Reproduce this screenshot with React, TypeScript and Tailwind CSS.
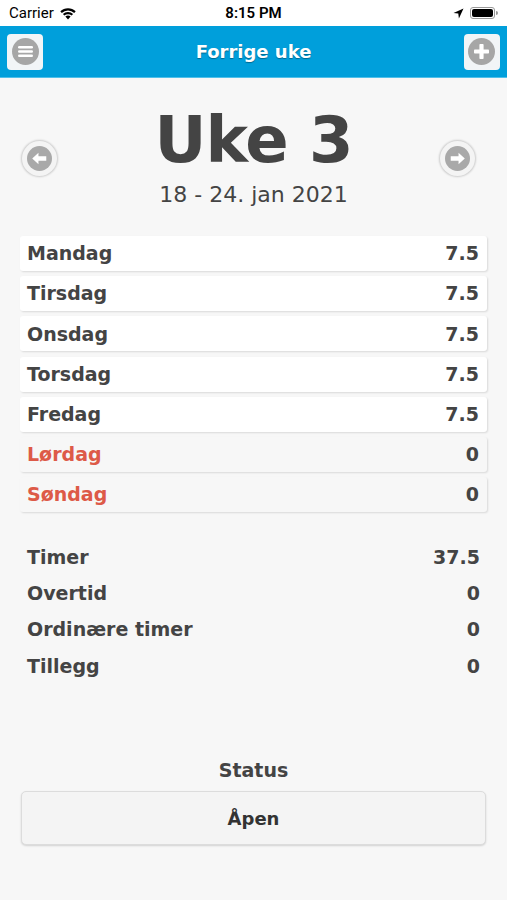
import React from "react";

const days = [
  { name: "Mandag", hours: "7.5", weekend: false },
  { name: "Tirsdag", hours: "7.5", weekend: false },
  { name: "Onsdag", hours: "7.5", weekend: false },
  { name: "Torsdag", hours: "7.5", weekend: false },
  { name: "Fredag", hours: "7.5", weekend: false },
  { name: "Lørdag", hours: "0", weekend: true },
  { name: "Søndag", hours: "0", weekend: true },
];

const totals = [
  { label: "Timer", value: "37.5" },
  { label: "Overtid", value: "0" },
  { label: "Ordinære timer", value: "0" },
  { label: "Tillegg", value: "0" },
];

function StatusBar() {
  return (
    <div className="flex h-[26px] items-center justify-between bg-white px-[9px] text-[15px] text-black [font-family:Roboto,'Liberation_Sans',sans-serif]">
      <div className="flex w-[120px] items-center gap-[5px]">
        <span>Carrier</span>
        <svg width="18" height="13" viewBox="0 0 18 13">
          <path d="M9 12.5 L6.4 9.6 A3.8 3.8 0 0 1 11.6 9.6 Z" fill="#000" />
          <path d="M3.9 7 A7.4 7.4 0 0 1 14.1 7 L12.6 8.6 A5.3 5.3 0 0 0 5.4 8.6 Z" fill="#000" />
          <path d="M1.3 4.3 A11 11 0 0 1 16.7 4.3 L15.2 5.9 A8.9 8.9 0 0 0 2.8 5.9 Z" fill="#000" />
        </svg>
      </div>
      <span className="font-semibold">8:15 PM</span>
      <div className="flex w-[120px] items-center justify-end gap-[6px]">
        <svg width="11" height="11" viewBox="0 0 11 11">
          <path d="M10.5 0.5 L0.5 5 L5.3 5.6 L5.9 10.5 Z" fill="#000" />
        </svg>
        <div className="flex items-center">
          <div className="flex h-[12px] w-[25px] items-center rounded-[3px] border border-[#999] p-[1px]">
            <div className="h-full w-full rounded-[2px] bg-black" />
          </div>
          <div className="ml-[1px] h-[4px] w-[2px] rounded-r-sm bg-[#999]" />
        </div>
      </div>
    </div>
  );
}

function IconBox({ children }: { children: React.ReactNode }) {
  return (
    <div className="flex h-[36px] w-[36px] items-center justify-center rounded-[4px] bg-[#f2f5f7]">
      {children}
    </div>
  );
}

function CircleArrow({ dir }: { dir: "left" | "right" }) {
  return (
    <div className="flex h-[35px] w-[35px] items-center justify-center rounded-full bg-[#f4f4f4] shadow-[0_0_2px_1px_rgba(0,0,0,0.18)]">
      <svg width="25" height="25" viewBox="0 0 24 24">
        <circle cx="12" cy="12" r="12" fill="#a9a9a9" />
        {dir === "left" ? (
          <path d="M5 12 L11 6.5 L11 9.8 L18.5 9.8 L18.5 14.2 L11 14.2 L11 17.5 Z" fill="#fff" />
        ) : (
          <path d="M19 12 L13 6.5 L13 9.8 L5.5 9.8 L5.5 14.2 L13 14.2 L13 17.5 Z" fill="#fff" />
        )}
      </svg>
    </div>
  );
}

export default function App() {
  return (
    <div className="flex min-h-[900px] w-full flex-col bg-[#f7f7f7] text-[#444] [font-family:'DejaVu_Sans',Verdana,sans-serif]">
      <StatusBar />

      {/* Header */}
      <div className="flex h-[52px] items-center justify-between border-b border-[#4fc0ea] bg-[#009fdb] px-[7px]">
        <IconBox>
          <svg width="27" height="27" viewBox="0 0 27 27">
            <circle cx="13.5" cy="13.5" r="13.5" fill="#a6a6a6" />
            <rect x="6" y="8" width="15" height="2.6" rx="1.3" fill="#fff" />
            <rect x="6" y="12.2" width="15" height="2.6" rx="1.3" fill="#fff" />
            <rect x="6" y="16.4" width="15" height="2.6" rx="1.3" fill="#fff" />
          </svg>
        </IconBox>
        <h1 className="text-[18px] font-bold text-white [text-shadow:0_1px_1px_rgba(0,0,0,0.35)]">
          Forrige uke
        </h1>
        <IconBox>
          <svg width="27" height="27" viewBox="0 0 27 27">
            <circle cx="13.5" cy="13.5" r="13.5" fill="#a6a6a6" />
            <rect x="11.4" y="6" width="4.2" height="15" rx="0.8" fill="#fff" />
            <rect x="6" y="11.4" width="15" height="4.2" rx="0.8" fill="#fff" />
          </svg>
        </IconBox>
      </div>

      {/* Week selector */}
      <div className="mt-[30px] flex items-center justify-between pl-[22px] pr-[32px]">
        <CircleArrow dir="left" />
        <div className="ml-[10px] flex flex-col items-center">
          <div className="text-[64px] font-bold leading-[64px] tracking-[-1px] text-[#444]">Uke 3</div>
          <div className="mt-[10px] text-[22px] leading-[26px] text-[#444]">18 - 24. jan 2021</div>
        </div>
        <CircleArrow dir="right" />
      </div>

      {/* Days */}
      <div className="mt-[28px] flex flex-col gap-[5.2px] px-[20px]">
        {days.map((d) => (
          <div
            key={d.name}
            className={`flex h-[35px] items-center justify-between rounded-[3px] pl-[7px] pr-[8px] text-[19px] font-bold shadow-[1px_1px_2px_rgba(0,0,0,0.12)] ${
              d.weekend ? "bg-[#f7f7f7]" : "bg-white"
            }`}
          >
            <span className={d.weekend ? "text-[#dd5a48]" : "text-[#444]"}>{d.name}</span>
            <span className="text-[#444]">{d.hours}</span>
          </div>
        ))}
      </div>

      {/* Totals */}
      <div className="mt-[26.5px] flex flex-col px-[27px]">
        {totals.map((t) => (
          <div key={t.label} className="flex h-[36.4px] items-center justify-between text-[19px] font-bold">
            <span>{t.label}</span>
            <span>{t.value}</span>
          </div>
        ))}
      </div>

      {/* Status */}
      <div className="mt-[74px] flex flex-col items-center px-[21px]">
        <div className="text-[19px] font-bold leading-[24px]">Status</div>
        <button className="mt-[9px] flex h-[54px] w-full items-center justify-center rounded-[5px] border border-[#dcdcdc] bg-[#f4f4f4] text-[18px] font-bold text-[#333] shadow-[0_1px_2px_rgba(0,0,0,0.15)]">
          Åpen
        </button>
      </div>
    </div>
  );
}
